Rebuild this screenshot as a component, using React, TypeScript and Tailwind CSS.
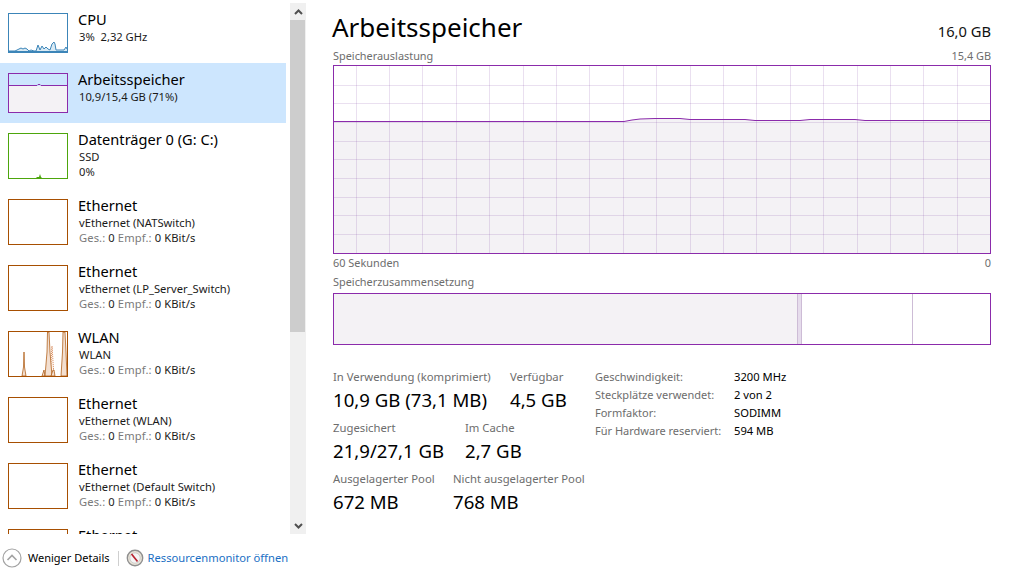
const CPU_LINE =
  "0,37 6,37 8,36 10,35 12,34 14,35 16,34 18,35 20,37 22,36 25,37 27,37 29,31 31,36 33,32 35,35 37,33 39,35 41,36 43,30 45,28 46,30 47,36 49,36 51,36 53,36 55,36 57,33 58,35";

const WLAN_SPIKES = [
  "13,44 14.5,35 15,20 15.5,35 17,44",
  "33,44 35,38 36,44",
  "36,44 38,20 38.5,0 40,0 41,20 43,44",
  "42,44 44,38 45,38 46,44",
  "52,44 53.5,20 54,0 56,0 57,20 58,44",
];

function CpuGraph() {
  return (
    <svg width="58" height="38" viewBox="0 0 58 38" className="block">
      <polygon points={`0,38 ${CPU_LINE} 58,38`} fill="#d9eaf4" />
      <polyline points={CPU_LINE} fill="none" stroke="#3c85b8" strokeWidth="1" />
      <line x1="0" y1="37.5" x2="58" y2="37.5" stroke="#3c85b8" />
    </svg>
  );
}

function MemoryGraph() {
  return (
    <svg width="58" height="38" viewBox="0 0 58 38" className="block">
      <rect x="0" y="12" width="58" height="26" fill="#f4f2f5" />
      <polyline points="0,11.5 28,11.5 29,10.5 31,10.5 32,11.5 58,11.5" fill="none" stroke="#8b2bab" />
    </svg>
  );
}

function DiskGraph() {
  return (
    <svg width="58" height="44" viewBox="0 0 58 44" className="block">
      <polygon points="27,44 28,43 30,43 31,40 32,43 33,44" fill="#4da60c" />
    </svg>
  );
}

function WlanGraph() {
  return (
    <svg width="58" height="44" viewBox="0 0 58 44" className="block">
      <polyline points="41,44 43,14 45,44" fill="#fdf5ee" stroke="#d98a5a" strokeWidth="1" strokeDasharray="1 1" />
      {WLAN_SPIKES.map((points) => (
        <polygon key={points} points={points} fill="#f3dfd0" stroke="#a74f01" strokeWidth="0.7" />
      ))}
    </svg>
  );
}

type ItemProps = {
  title: string;
  sub?: string;
  third?: string;
  net?: boolean;
  selected?: boolean;
  color: string;
  short?: boolean;
  graph?: React.ReactNode;
};

function SideItem({ title, sub, third, net, selected, color, short, graph }: ItemProps) {
  return (
    <div className={`flex shrink-0 pl-2 pt-[10px] ${short ? "h-[60px]" : "h-[66px]"} ${selected ? "bg-[#cde6fe]" : ""}`}>
      <div className={`w-[60px] border ${short ? "h-[40px]" : "h-[46px]"} ${color}`}>{graph}</div>
      <div className="ml-[10px] -mt-[4px] whitespace-pre">
        <div className="text-[14.6px] leading-[20px] text-black">{title}</div>
        {sub && <div className="ml-px text-[11.2px] leading-[16px] text-[#1a1a1a]">{sub}</div>}
        {third && <div className="ml-px -mt-px text-[11.2px] leading-[15px] text-[#1a1a1a]">{third}</div>}
        {net && (
          <div className="ml-px -mt-px text-[11.2px] leading-[16px] tracking-[0.1px] text-[#1a1a1a]">
            <span className="text-[#7a7a7a]">Ges.:</span> 0 <span className="text-[#7a7a7a]">Empf.:</span> 0 KBit/s
          </div>
        )}
      </div>
    </div>
  );
}

function Scrollbar() {
  return (
    <div className="mt-[3px] flex h-[531px] w-4 flex-col bg-[#f0f0f0]">
      <div className="flex h-[17px] items-center justify-center">
        <svg width="9" height="6" viewBox="0 0 9 6">
          <polyline points="1,5 4.5,1.5 8,5" fill="none" stroke="#505050" strokeWidth="2" />
        </svg>
      </div>
      <div className="h-[312px] w-[15px] bg-[#cdcdcd]" />
      <div className="flex-1" />
      <div className="flex h-[17px] items-center justify-center">
        <svg width="9" height="6" viewBox="0 0 9 6">
          <polyline points="1,1 4.5,4.5 8,1" fill="none" stroke="#505050" strokeWidth="2" />
        </svg>
      </div>
    </div>
  );
}

function Sidebar() {
  return (
    <div className="flex h-[534px] w-[306px] shrink-0">
      <div className="flex w-[286px] shrink-0 flex-col overflow-hidden pt-[3px]">
        <SideItem short title="CPU" sub="3%  2,32 GHz" color="border-[#3c85b8]" graph={<CpuGraph />} />
        <SideItem short selected title="Arbeitsspeicher" sub="10,9/15,4 GB (71%)" color="border-[#8b2bab]" graph={<MemoryGraph />} />
        <SideItem title="Datenträger 0 (G: C:)" sub="SSD" third="0%" color="border-[#4da60c]" graph={<DiskGraph />} />
        <SideItem net title="Ethernet" sub="vEthernet (NATSwitch)" color="border-[#a74f01]" />
        <SideItem net title="Ethernet" sub="vEthernet (LP_Server_Switch)" color="border-[#a74f01]" />
        <SideItem net title="WLAN" sub="WLAN" color="border-[#a74f01]" graph={<WlanGraph />} />
        <SideItem net title="Ethernet" sub="vEthernet (WLAN)" color="border-[#a74f01]" />
        <SideItem net title="Ethernet" sub="vEthernet (Default Switch)" color="border-[#a74f01]" />
        <SideItem title="Ethernet" color="border-[#a74f01]" />
      </div>
      <div className="w-1 shrink-0" />
      <Scrollbar />
    </div>
  );
}

function UsageChart() {
  const cols = Array.from({ length: 19 }, (_, i) => 355.5 + i * 33.4);
  const rows = Array.from({ length: 9 }, (_, i) => 84.5 + i * 18.7);
  const line =
    "334,121.5 624,121.5 632,120 640,119 655,118.5 680,118.5 690,119.5 745,119.5 755,120.5 800,120.5 810,119.5 855,119.5 865,120.5 990,120.5";
  return (
    <div className="h-[189px] border border-[#8b2bab]">
      <svg width="656" height="187" viewBox="334 66 656 187" className="block">
        <polygon points={`${line} 990,253 334,253`} fill="#f4f2f5" />
        {cols.map((x) => (
          <line key={x} x1={Math.round(x) + 0.5} y1="66" x2={Math.round(x) + 0.5} y2="253" stroke="#7b3fa0" strokeOpacity="0.16" />
        ))}
        {rows.map((y) => (
          <line key={y} x1="334" y1={Math.round(y) + 0.5} x2="990" y2={Math.round(y) + 0.5} stroke="#7b3fa0" strokeOpacity="0.16" />
        ))}
        <polyline points={line} fill="none" stroke="#8b2bab" strokeWidth="1" />
      </svg>
    </div>
  );
}

function CompositionBar() {
  return (
    <div className="flex h-[52px] border border-[#8b2bab]">
      <div className="w-[464px] border-r border-[#cdbcd6] bg-[#f4f2f5]" />
      <div className="w-[4px] border-r border-[#cdbcd6] bg-[#e6dcec]" />
      <div className="w-[111px] border-r border-[#cdbcd6]" />
      <div className="flex-1" />
    </div>
  );
}

function Stat({ label, value, className }: { label: string; value: string; className?: string }) {
  return (
    <div className={`shrink-0 whitespace-nowrap ${className ?? ""}`}>
      <div className="text-[11.3px] leading-[16px] text-[#6d6d6d]">{label}</div>
      <div className="mt-[3px] text-[18.6px] leading-[24px] text-black">{value}</div>
    </div>
  );
}

function HardwareTable() {
  const rows = [
    ["Geschwindigkeit:", "3200 MHz"],
    ["Steckplätze verwendet:", "2 von 2"],
    ["Formfaktor:", "SODIMM"],
    ["Für Hardware reserviert:", "594 MB"],
  ];
  return (
    <div className="ml-[12px] -mt-px">
      {rows.map(([k, v]) => (
        <div key={k} className="flex whitespace-nowrap leading-[18px]">
          <div className="w-[139px] text-[11px] text-[#6d6d6d]">{k}</div>
          <div className="text-[11.2px] text-black">{v}</div>
        </div>
      ))}
    </div>
  );
}

function MainPanel() {
  return (
    <div className="w-[704px] pl-[27px] pr-[19px]">
      <div className="flex items-center justify-between pt-[9px]">
        <div className="-ml-[1px] text-[26px] leading-[36px] text-black">Arbeitsspeicher</div>
        <div className="mt-2 text-[14.7px] leading-[20px] text-[#111]">16,0 GB</div>
      </div>
      <div className="mt-[3px] flex justify-between text-[10.9px] leading-[16px] text-[#6d6d6d]">
        <span>Speicherauslastung</span>
        <span>15,4 GB</span>
      </div>
      <div className="mt-[1px]">
        <UsageChart />
      </div>
      <div className="mt-[1px] flex justify-between text-[10.9px] leading-[16px] text-[#6d6d6d]">
        <span>60 Sekunden</span>
        <span>0</span>
      </div>
      <div className="mt-[3px] text-[10.9px] leading-[16px] text-[#6d6d6d]">Speicherzusammensetzung</div>
      <div className="mt-[3px]">
        <CompositionBar />
      </div>
      <div className="mt-[24px] flex">
        <div className="w-[250px] shrink-0">
          <div className="flex gap-[20px]">
            <Stat label="In Verwendung (komprimiert)" value="10,9 GB (73,1 MB)" className="w-[157px]" />
            <Stat label="Verfügbar" value="4,5 GB" />
          </div>
          <div className="mt-[8px] flex">
            <Stat label="Zugesichert" value="21,9/27,1 GB" className="w-[132px]" />
            <Stat label="Im Cache" value="2,7 GB" />
          </div>
          <div className="mt-[8px] flex">
            <Stat label="Ausgelagerter Pool" value="672 MB" className="w-[120px]" />
            <Stat label="Nicht ausgelagerter Pool" value="768 MB" />
          </div>
        </div>
        <HardwareTable />
      </div>
    </div>
  );
}

function Footer() {
  return (
    <div className="flex h-[42px] items-center pl-[2px] pt-[6px]">
      <svg width="20" height="20" viewBox="0 0 20 20">
        <circle cx="10" cy="10" r="9" fill="#fff" stroke="#a3a3a3" strokeWidth="1.2" />
        <polyline points="5.5,12 10,7.5 14.5,12" fill="none" stroke="#a3a3a3" strokeWidth="1.6" />
      </svg>
      <span className="ml-[6px] text-[11px] text-black">Weniger Details</span>
      <div className="ml-[8px] h-[15px] w-px bg-[#cfcfcf]" />
      <svg width="18" height="18" viewBox="0 0 18 18" className="ml-[7px]">
        <circle cx="9" cy="9" r="7.7" fill="#e8e3d8" stroke="#8f8f8f" strokeWidth="1.4" />
        <circle cx="9" cy="9" r="5.2" fill="#f5f5f5" stroke="#b8b8b8" strokeWidth="0.6" />
        <line x1="5.5" y1="5" x2="11.5" y2="12.5" stroke="#b8232f" strokeWidth="1.7" />
      </svg>
      <span className="ml-[4px] text-[11.2px] text-[#1a6fc4]">Ressourcenmonitor öffnen</span>
    </div>
  );
}

export default function App() {
  return (
    <div className="h-[576px] w-[1010px] overflow-hidden bg-white font-['Noto_Sans',sans-serif]">
      <div className="flex h-[534px]">
        <Sidebar />
        <MainPanel />
      </div>
      <Footer />
    </div>
  );
}
